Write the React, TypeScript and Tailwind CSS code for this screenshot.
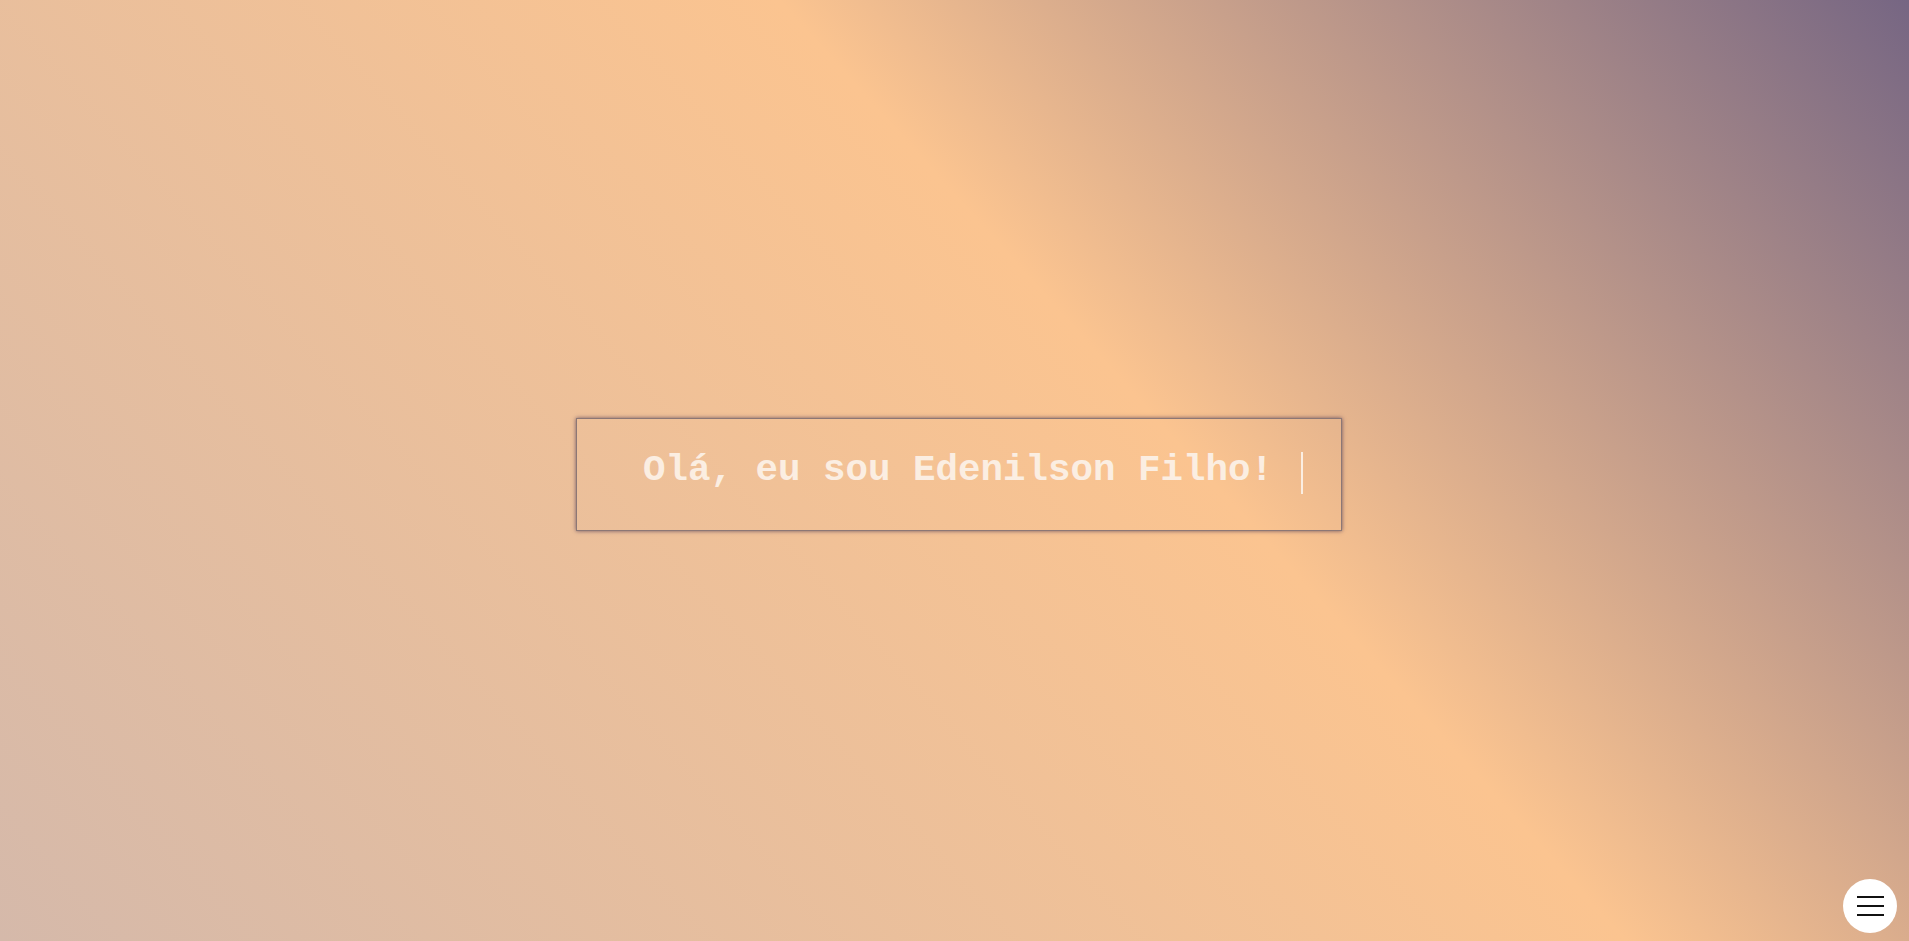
import React from "react";

export default function App() {
  return (
    <div className="relative h-[941px] w-full overflow-hidden bg-[linear-gradient(48deg,#d5b9aa_0%,#fbc490_59%,#766683_100%)]">
      <div className="flex h-full w-full items-center justify-center pt-[7px] pl-[9px]">
        <div className="flex h-[113px] w-[766px] items-center border border-[#8c7775] pb-[2px] pl-[66px] shadow-[0_0_4px_rgba(70,50,80,0.75)]">
          <span
            className="mb-[4px] text-[37.5px] font-bold leading-none text-[#fbeee2]"
            style={{ fontFamily: '"Liberation Mono", "Courier New", monospace' }}
          >
            Olá, eu sou Edenilson Filho!
          </span>
          <span className="ml-[28px] h-[42px] w-[2px] bg-[#fbeee2]" />
        </div>
      </div>
      <button className="absolute bottom-[8px] right-[12px] flex h-[54px] w-[54px] flex-col items-center justify-center gap-[7px] rounded-full bg-white">
        <span className="block h-[2px] w-[27px] bg-[#111]" />
        <span className="block h-[2px] w-[27px] bg-[#111]" />
        <span className="block h-[2px] w-[27px] bg-[#111]" />
      </button>
    </div>
  );
}
